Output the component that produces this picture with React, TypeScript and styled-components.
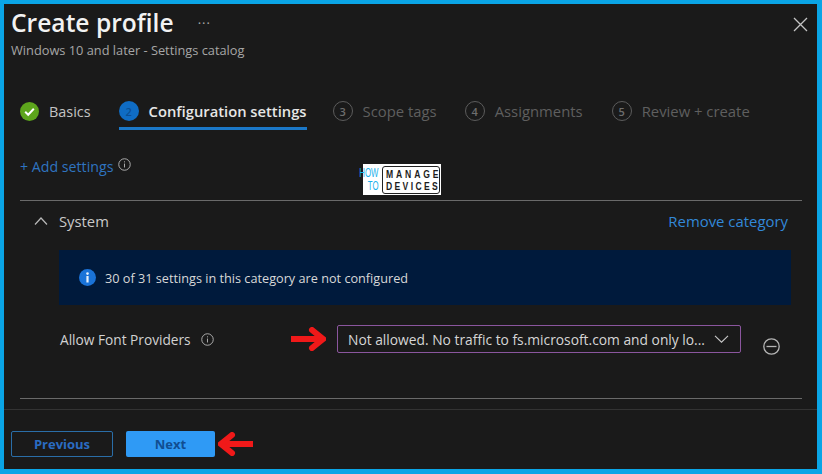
import * as React from "react"
import styled, { createGlobalStyle } from "styled-components"

const steps = [
  { n: "2", label: "Configuration settings", state: "active", gap: 26 },
  { n: "3", label: "Scope tags", state: "idle", gap: 28 },
  { n: "4", label: "Assignments", state: "idle", gap: 29 },
  { n: "5", label: "Review + create", state: "idle", gap: 0 },
]

const InfoOutline = ({ size = 13 }: { size?: number }) => (
  <svg width={size} height={size} viewBox="0 0 14 14" fill="none" stroke="#b5b5b5" strokeWidth="1">
    <circle cx="7" cy="7" r="6.2" />
    <path d="M7 6v4.2" />
    <path d="M7 3.6v1.1" />
  </svg>
)

const RedArrow = ({ flip = false }: { flip?: boolean }) => (
  <svg width="36" height="24" viewBox="0 0 36 24" style={flip ? { transform: "scaleX(-1)" } : undefined}>
    <path d="M1 12h31" stroke="#f01919" strokeWidth="6" fill="none" />
    <path d="M22 3l11 9-11 9" stroke="#f01919" strokeWidth="6" fill="none" strokeLinecap="round" />
  </svg>
)

const App = () => {
  return (
    <Frame>
      <GlobalStyle />
      <Header>
        <div>
          <TitleRow>
            <Title>Create profile</Title>
            <Dots>···</Dots>
          </TitleRow>
          <Subtitle>Windows 10 and later - Settings catalog</Subtitle>
        </div>
        <svg width="15" height="15" viewBox="0 0 15 15" stroke="#c4c4c4" strokeWidth="1.3">
          <path d="M1 1l13 13M14 1L1 14" />
        </svg>
      </Header>

      <Tabs>
        <Tab $gap={28}>
          <svg width="19" height="19" viewBox="0 0 19 19">
            <circle cx="9.5" cy="9.5" r="9.5" fill="#5da51c" />
            <path d="M5.2 9.8l3 3 5.6-6" stroke="#fff" strokeWidth="2" fill="none" />
          </svg>
          <TabLabel $state="done">Basics</TabLabel>
        </Tab>
        {steps.map((s) => (
          <Tab key={s.n} $gap={s.gap} $active={s.state === "active"}>
            <StepNumber $active={s.state === "active"}>{s.n}</StepNumber>
            <TabLabel $state={s.state}>{s.label}</TabLabel>
          </Tab>
        ))}
      </Tabs>

      <AddRow>
        <AddLink>+ Add settings</AddLink>
        <InfoOutline />
      </AddRow>
      <Logo>
        <LogoHow>
          <span>HOW</span>
          <span>TO</span>
        </LogoHow>
        <LogoBox>
          <LogoLine $spacing={3.7}>MANAGE</LogoLine>
          <LogoLine $spacing={3}>DEVICES</LogoLine>
        </LogoBox>
      </Logo>

      <Category>
        <CategoryHead>
          <CategoryName>
            <svg width="14" height="8" viewBox="0 0 14 8" fill="none" stroke="#b9b9b9" strokeWidth="1.2">
              <path d="M1 7.5L7 1l6 6.5" />
            </svg>
            <span>System</span>
          </CategoryName>
          <RemoveLink>Remove category</RemoveLink>
        </CategoryHead>

        <Banner>
          <svg width="17" height="17" viewBox="0 0 17 17">
            <circle cx="8.5" cy="8.5" r="8.5" fill="#1a73d8" />
            <rect x="7.4" y="7" width="2.2" height="6.5" fill="#e8f1fb" />
            <circle cx="8.5" cy="4.6" r="1.3" fill="#e8f1fb" />
          </svg>
          <span>30 of 31 settings in this category are not configured</span>
        </Banner>

        <SettingRow>
          <SettingLabel>
            <LabelText>Allow Font Providers</LabelText>
            <InfoOutline />
          </SettingLabel>
          <ArrowSlot>
            <RedArrow />
          </ArrowSlot>
          <Select>
            <SelectText>Not allowed. No traffic to fs.microsoft.com and only lo...</SelectText>
            <svg width="15" height="8" viewBox="0 0 15 8" fill="none" stroke="#c9c9c9" strokeWidth="1.1">
              <path d="M1 .8l6.5 6.4L14 .8" />
            </svg>
          </Select>
          <MinusSlot>
            <svg width="17" height="17" viewBox="0 0 17 17" fill="none" stroke="#b5b5b5" strokeWidth="1.3">
              <circle cx="8.5" cy="8.5" r="7.7" />
              <path d="M3.5 8.5h10" />
            </svg>
          </MinusSlot>
        </SettingRow>
      </Category>

      <Footer>
        <OutlineButton>Previous</OutlineButton>
        <PrimaryButton>Next</PrimaryButton>
        <RedArrow flip />
      </Footer>
    </Frame>
  )
}

export default App

const GlobalStyle = createGlobalStyle`
  html, body {
    margin: 0;
    padding: 0;
    background: #0aa5e6;
  }
  * {
    box-sizing: border-box;
  }
`

const Frame = styled.div`
  position: relative;
  width: 822px;
  height: 474px;
  background: #1a1a1a;
  border-style: solid;
  border-color: #0aa5e6;
  border-width: 4px 5px 5px 4px;
  font-family: "Open Sans", "Noto Sans", sans-serif;
  color: #d8d8d8;
  overflow: hidden;
`

const Header = styled.div`
  display: flex;
  justify-content: space-between;
  padding: 2px 9px 0 7px;
  align-items: flex-start;

  > svg {
    margin-top: 11px;
  }
`

const TitleRow = styled.div`
  display: flex;
  align-items: center;
  gap: 24px;
  height: 34px;
`

const Title = styled.h1`
  margin: 0;
  font-size: 24.6px;
  font-weight: 600;
  color: #f2f2f2;
  line-height: 34px;
`

const Dots = styled.span`
  font-size: 13px;
  color: #a8a8a8;
  letter-spacing: 1px;
`

const Subtitle = styled.div`
  font-size: 12.8px;
  color: #a6a6a6;
  line-height: 17px;
  margin-top: 2px;
`

const Tabs = styled.div`
  display: flex;
  align-items: center;
  height: 38px;
  margin-top: 33px;
  padding-left: 16px;
`

const Tab = styled.div<{ $gap: number; $active?: boolean }>`
  position: relative;
  display: flex;
  align-items: center;
  gap: 10px;
  height: 38px;
  margin-right: ${(p) => p.$gap}px;

  ${(p) =>
    p.$active &&
    `
    &::after {
      content: "";
      position: absolute;
      left: 0;
      right: 0;
      bottom: 0;
      height: 3px;
      background: #1b78c8;
    }
  `}
`

const StepNumber = styled.span<{ $active: boolean }>`
  display: flex;
  align-items: center;
  justify-content: center;
  width: 20px;
  height: 20px;
  border-radius: 50%;
  font-size: 11px;
  font-weight: 600;
  background: ${(p) => (p.$active ? "#0f6cc4" : "transparent")};
  color: ${(p) => (p.$active ? "#0b4f94" : "#6e6e6e")};
  border: ${(p) => (p.$active ? "none" : "1.5px solid #5c5c5c")};
`

const TabLabel = styled.span<{ $state: string }>`
  font-size: ${(p) => (p.$state === "active" ? 14.75 : p.$state === "done" ? 14.4 : 14.85)}px;
  white-space: nowrap;
  font-weight: ${(p) => (p.$state === "active" ? 600 : 400)};
  color: ${(p) => (p.$state === "active" ? "#e6e6e6" : p.$state === "done" ? "#c4c4c4" : "#5f5f5f")};
`

const AddRow = styled.div`
  display: flex;
  align-items: center;
  gap: 5px;
  height: 20px;
  margin-top: 26px;
  padding-left: 16px;

  svg {
    margin-top: -3px;
  }
`

const AddLink = styled.span`
  font-size: 14.2px;
  color: #2f74c0;
`

const Logo = styled.div`
  position: absolute;
  left: 359px;
  top: 160px;
  width: 78px;
  height: 31px;
  background: #fff;
  display: flex;
  align-items: center;
  gap: 4px;
  padding: 0 1px 0 0;
`

const LogoHow = styled.div`
  display: flex;
  flex-direction: column;
  align-items: flex-end;
  width: 15px;
  font-family: "Liberation Sans", sans-serif;
  font-size: 12px;
  line-height: 13px;
  color: #19b2ec;

  span {
    transform: scaleX(0.65);
    transform-origin: right center;
    white-space: nowrap;
  }
`

const LogoBox = styled.div`
  flex: 1;
  height: 28px;
  display: flex;
  flex-direction: column;
  justify-content: center;
  border: 1.5px solid #222;
  border-radius: 3px;
  padding: 0 1px 0 3px;
  overflow: hidden;
`

const LogoLine = styled.span<{ $spacing: number }>`
  font-family: "Liberation Sans", sans-serif;
  font-size: 11px;
  font-weight: 700;
  line-height: 12px;
  color: #1d1d1d;
  white-space: nowrap;
  letter-spacing: ${(p) => p.$spacing}px;
  transform: scaleX(0.78);
  transform-origin: left center;
`

const Category = styled.div`
  margin: 24px 15px 0 16px;
  height: 199px;
  border-top: 1px solid #6a6a6a;
  border-bottom: 1px solid #6a6a6a;
  padding: 0 11px 0 39px;
`

const CategoryHead = styled.div`
  display: flex;
  justify-content: space-between;
  align-items: center;
  height: 40px;
  padding-right: 3px;
`

const CategoryName = styled.div`
  display: flex;
  align-items: center;
  gap: 11px;
  margin-left: -25px;
  font-size: 14.8px;
  color: #c9c9c9;
`

const RemoveLink = styled.span`
  font-size: 14.9px;
  color: #3288d8;
`

const Banner = styled.div`
  display: flex;
  align-items: center;
  gap: 9px;
  height: 55px;
  margin-top: 9px;
  padding-left: 20px;
  background: #001a3c;
  font-size: 12.7px;
  color: #d8d8d8;
`

const SettingRow = styled.div`
  display: flex;
  align-items: center;
  height: 28px;
  margin-top: 20px;
`

const SettingLabel = styled.div`
  display: flex;
  align-items: center;
  gap: 10px;
  width: 231px;
  padding-left: 1px;
`

const LabelText = styled.span`
  font-size: 13.7px;
  font-weight: 500;
  color: #d2d2d2;
  white-space: nowrap;
`

const ArrowSlot = styled.div`
  display: flex;
  width: 47px;
`

const Select = styled.div`
  display: flex;
  align-items: center;
  justify-content: space-between;
  width: 404px;
  height: 28px;
  padding: 0 11px 0 10px;
  border: 1px solid #8b569e;
  border-radius: 2px;
`

const SelectText = styled.span`
  font-size: 13.8px;
  color: #d6d6d6;
  white-space: nowrap;
`

const MinusSlot = styled.div`
  display: flex;
  margin: 15px 0 0 22px;
`

const Footer = styled.div`
  display: flex;
  align-items: center;
  height: 60px;
  margin: 10px -5px 0 -4px;
  padding: 9px 0 0 11px;
  border-top: 1px solid #333;

  > svg {
    margin-left: 3px;
  }
`

const OutlineButton = styled.button`
  width: 102px;
  height: 26px;
  margin-right: 13px;
  background: transparent;
  border: 1px solid #2a6ea8;
  border-radius: 2px;
  color: #2a6cc2;
  font-family: inherit;
  font-size: 13px;
  font-weight: 700;
`

const PrimaryButton = styled.button`
  width: 89px;
  height: 26px;
  background: #2f9af5;
  border: none;
  border-radius: 2px;
  color: #114e91;
  font-family: inherit;
  font-size: 13px;
  font-weight: 700;
`
